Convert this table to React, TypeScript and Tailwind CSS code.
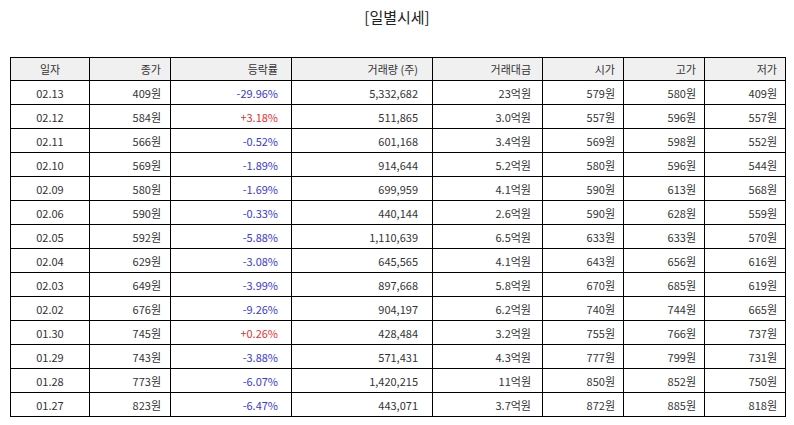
import React from "react";

type Row = [string, string, string, string, string, string, string, string];

const rows: Row[] = [
  ["02.13", "409원", "-29.96%", "5,332,682", "23억원", "579원", "580원", "409원"],
  ["02.12", "584원", "+3.18%", "511,865", "3.0억원", "557원", "596원", "557원"],
  ["02.11", "566원", "-0.52%", "601,168", "3.4억원", "569원", "598원", "552원"],
  ["02.10", "569원", "-1.89%", "914,644", "5.2억원", "580원", "596원", "544원"],
  ["02.09", "580원", "-1.69%", "699,959", "4.1억원", "590원", "613원", "568원"],
  ["02.06", "590원", "-0.33%", "440,144", "2.6억원", "590원", "628원", "559원"],
  ["02.05", "592원", "-5.88%", "1,110,639", "6.5억원", "633원", "633원", "570원"],
  ["02.04", "629원", "-3.08%", "645,565", "4.1억원", "643원", "656원", "616원"],
  ["02.03", "649원", "-3.99%", "897,668", "5.8억원", "670원", "685원", "619원"],
  ["02.02", "676원", "-9.26%", "904,197", "6.2억원", "740원", "744원", "665원"],
  ["01.30", "745원", "+0.26%", "428,484", "3.2억원", "755원", "766원", "737원"],
  ["01.29", "743원", "-3.88%", "571,431", "4.3억원", "777원", "799원", "731원"],
  ["01.28", "773원", "-6.07%", "1,420,215", "11억원", "850원", "852원", "750원"],
  ["01.27", "823원", "-6.47%", "443,071", "3.7억원", "872원", "885원", "818원"],
];

const headers = ["일자", "종가", "등락률", "거래량 (주)", "거래대금", "시가", "고가", "저가"];

const widths = ["w-[79px]", "w-[81px]", "w-[121px]", "w-[141px]", "w-[110px]", "w-[81px]", "w-[81px]", "w-[81px]"];
const pads = ["text-center", "text-right pr-[9px]", "text-right pr-[13px]", "text-right pr-[14px]", "text-right pr-[11px]", "text-right pr-[8px]", "text-right pr-[8px]", "text-right pr-[8px]"];

export default function App() {
  return (
    <div
      className="w-[794px] h-[425px] bg-white text-[#333]"
      style={{ fontFamily: '"Noto Sans CJK KR", "Noto Sans", sans-serif' }}
    >
      <div className="h-[35px] pt-[6px] text-center text-[15px] leading-[22px] text-[#222]">[일별시세]</div>
      <div className="pt-[22px] pl-[10px]">
        <table className="border-collapse table-fixed w-[776px] text-[11px]">
          <thead>
            <tr className="h-[23px] bg-[#f0f0f0]">
              {headers.map((h, i) => (
                <th key={i} className={`${widths[i]} ${pads[i]} border border-black font-normal leading-[14px] p-0`}>
                  {h}
                </th>
              ))}
            </tr>
          </thead>
          <tbody>
            {rows.map((r, ri) => (
              <tr key={ri} className="h-[24px]">
                {r.map((c, i) => {
                  const color =
                    i === 2 ? (c.startsWith("+") ? "text-[#e03333]" : "text-[#3a3acc]") : "";
                  return (
                    <td key={i} className={`${pads[i]} ${color} border border-black leading-[14px] py-0`}>
                      {c}
                    </td>
                  );
                })}
              </tr>
            ))}
          </tbody>
        </table>
      </div>
    </div>
  );
}
